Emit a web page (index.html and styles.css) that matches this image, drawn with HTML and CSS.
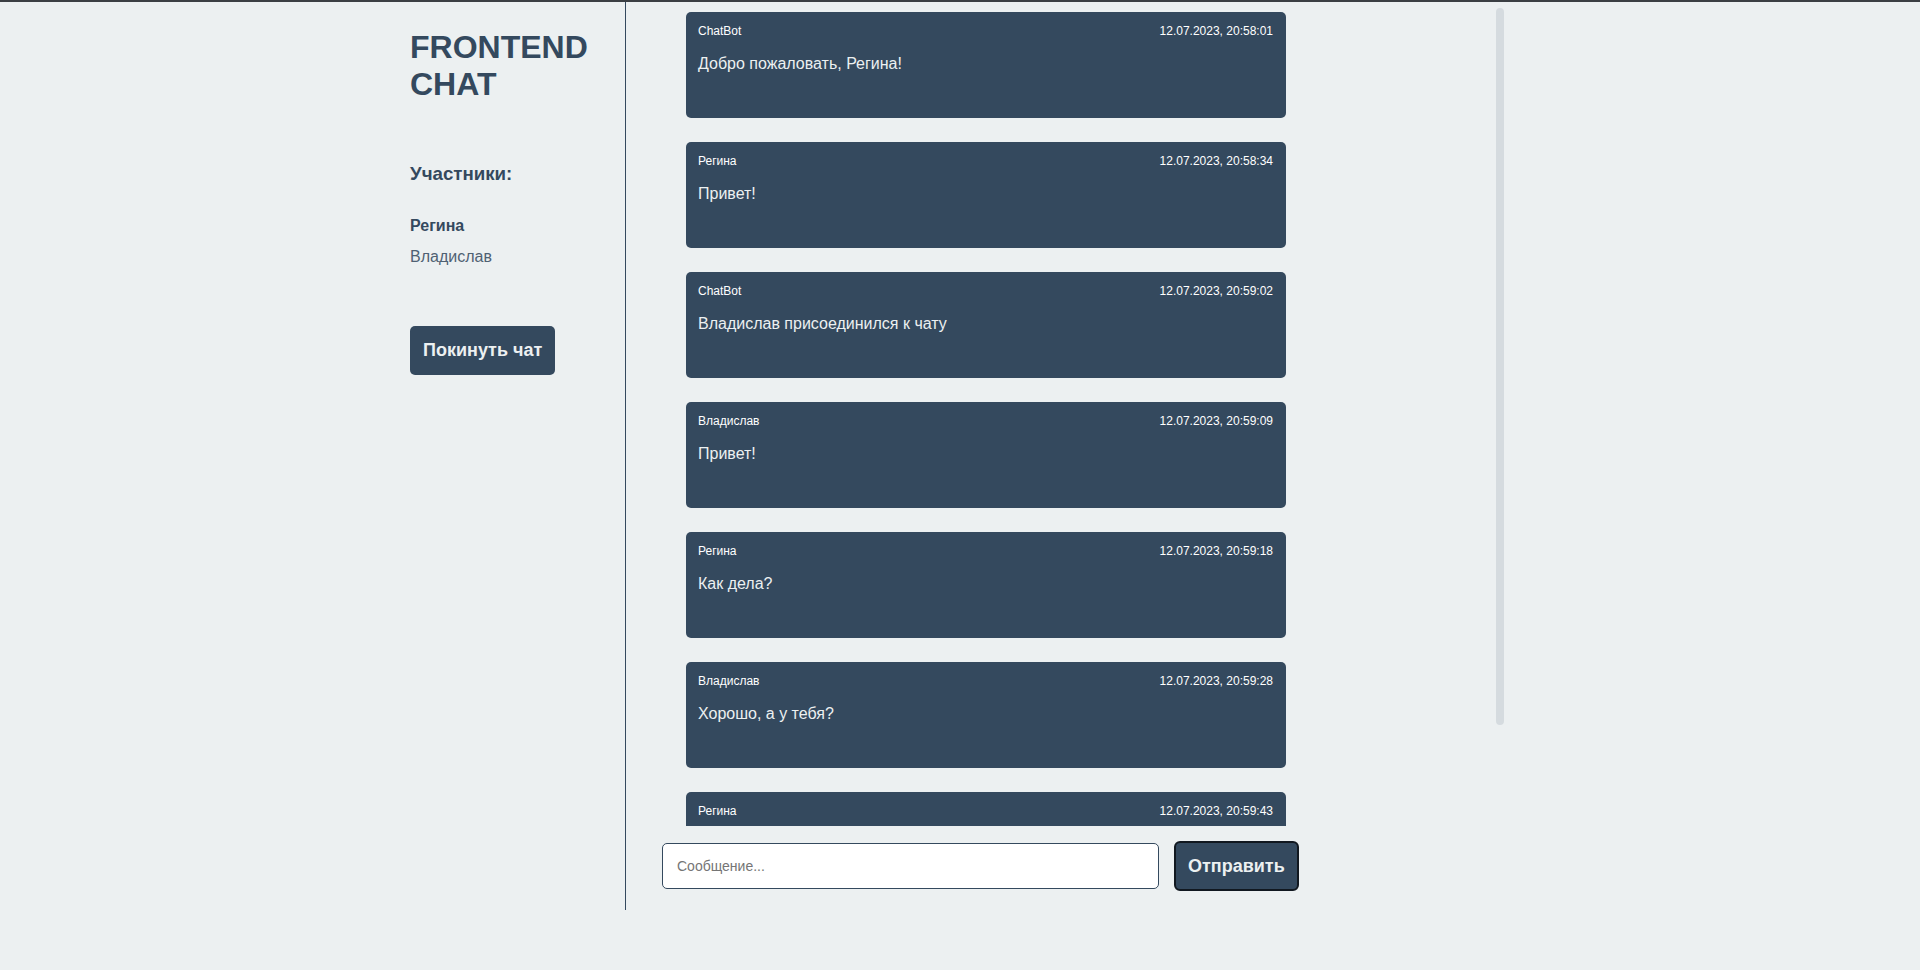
FILE: index.html
```html
<!DOCTYPE html>
<html lang="ru">
<head>
<meta charset="utf-8">
<title>Frontend Chat</title>
<link rel="stylesheet" href="styles.css">
</head>
<body>
<div class="app">
  <aside class="sidebar">
    <h1 class="logo">FRONTEND<br>CHAT</h1>
    <h3 class="members-title">Участники:</h3>
    <ul class="members">
      <li class="member member-me">Регина</li>
      <li class="member">Владислав</li>
    </ul>
    <button class="leave-btn">Покинуть чат</button>
  </aside>
  <main class="chat">
    <div class="messages-wrap">
      <div class="messages">
        <div class="message">
          <div class="message-head"><span class="author">ChatBot</span><span class="time">12.07.2023, 20:58:01</span></div>
          <div class="message-text">Добро пожаловать, Регина!</div>
        </div>
        <div class="message">
          <div class="message-head"><span class="author">Регина</span><span class="time">12.07.2023, 20:58:34</span></div>
          <div class="message-text">Привет!</div>
        </div>
        <div class="message">
          <div class="message-head"><span class="author">ChatBot</span><span class="time">12.07.2023, 20:59:02</span></div>
          <div class="message-text">Владислав присоединился к чату</div>
        </div>
        <div class="message">
          <div class="message-head"><span class="author">Владислав</span><span class="time">12.07.2023, 20:59:09</span></div>
          <div class="message-text">Привет!</div>
        </div>
        <div class="message">
          <div class="message-head"><span class="author">Регина</span><span class="time">12.07.2023, 20:59:18</span></div>
          <div class="message-text">Как дела?</div>
        </div>
        <div class="message">
          <div class="message-head"><span class="author">Владислав</span><span class="time">12.07.2023, 20:59:28</span></div>
          <div class="message-text">Хорошо, а у тебя?</div>
        </div>
        <div class="message">
          <div class="message-head"><span class="author">Регина</span><span class="time">12.07.2023, 20:59:43</span></div>
        </div>
      </div>
      <div class="scroll-thumb"></div>
    </div>
    <form class="composer" onsubmit="return false;">
      <input class="composer-input" type="text" placeholder="Сообщение...">
      <button class="send-btn" type="submit">Отправить</button>
    </form>
  </main>
</div>
</body>
</html>
```
FILE: styles.css
```css
* {
  box-sizing: border-box;
}

html, body {
  margin: 0;
  padding: 0;
}

body {
  background: #ecf0f1;
  border-top: 2px solid #3b3f43;
  font-family: "Liberation Sans", Arial, sans-serif;
  color: #34495e;
  height: 970px;
  overflow: hidden;
}

.app {
  width: 1100px;
  margin: 0 auto;
  height: 908px;
  display: flex;
}

.sidebar {
  width: 216px;
  flex: none;
  border-right: 1px solid #34495e;
  padding-top: 27px;
}

.logo {
  margin: 0;
  font-size: 32px;
  line-height: 37px;
  font-weight: bold;
  color: #34495e;
}

.members-title {
  margin: 60px 0 0;
  font-size: 18.72px;
  line-height: 22px;
  font-weight: bold;
  color: #34495e;
}

.members {
  list-style: none;
  margin: 32px 0 0;
  padding: 0;
  display: flex;
  flex-direction: column;
  gap: 12.7px;
}

.member {
  font-size: 16px;
  line-height: 18px;
  color: #4f6173;
}

.member-me {
  font-weight: bold;
  color: #34495e;
}

.leave-btn {
  margin-top: 60px;
  display: block;
  border: none;
  border-radius: 5px;
  background: #34495e;
  color: #ecf0f1;
  font-family: "Liberation Sans", Arial, sans-serif;
  font-size: 18px;
  line-height: 21px;
  font-weight: bold;
  padding: 14px 13px;
  cursor: pointer;
}

.chat {
  flex: 1;
  display: flex;
  flex-direction: column;
  min-width: 0;
}

.messages-wrap {
  position: relative;
  margin: 6px 6px 0 0;
  height: 818px;
}

.messages {
  height: 100%;
  overflow: hidden;
  padding: 4px 0 0 60px;
  display: flex;
  flex-direction: column;
  gap: 24px;
}

.scroll-thumb {
  position: absolute;
  top: 0;
  right: 0;
  width: 8px;
  height: 717px;
  background: #d5dbdf;
  border-radius: 4px;
}

.message {
  flex: none;
  width: 600px;
  height: 106px;
  background: #34495e;
  color: #ecf0f1;
  border-radius: 5px;
  padding: 12px 13px 12px 12px;
}

.message-head {
  display: flex;
  justify-content: space-between;
  font-size: 12px;
  line-height: 14px;
  color: #ffffff;
}

.message-text {
  margin-top: 16px;
  font-size: 16px;
  line-height: 19px;
}

.composer {
  margin: 15px 0 0;
  padding-left: 36px;
  display: flex;
  align-items: center;
  gap: 15px;
}

.composer-input {
  width: 497px;
  height: 46px;
  border: 1px solid #34495e;
  border-radius: 5px;
  background: #ffffff;
  padding: 0 14px;
  font-family: "Liberation Sans", Arial, sans-serif;
  font-size: 14px;
  color: #34495e;
  outline: none;
}

.composer-input::placeholder {
  color: #757575;
}

.send-btn {
  border: 2px solid #111820;
  border-radius: 6px;
  background: #34495e;
  color: #ecf0f1;
  font-family: "Liberation Sans", Arial, sans-serif;
  font-size: 18px;
  line-height: 22px;
  font-weight: bold;
  padding: 12px 12px;
  cursor: pointer;
}
```
